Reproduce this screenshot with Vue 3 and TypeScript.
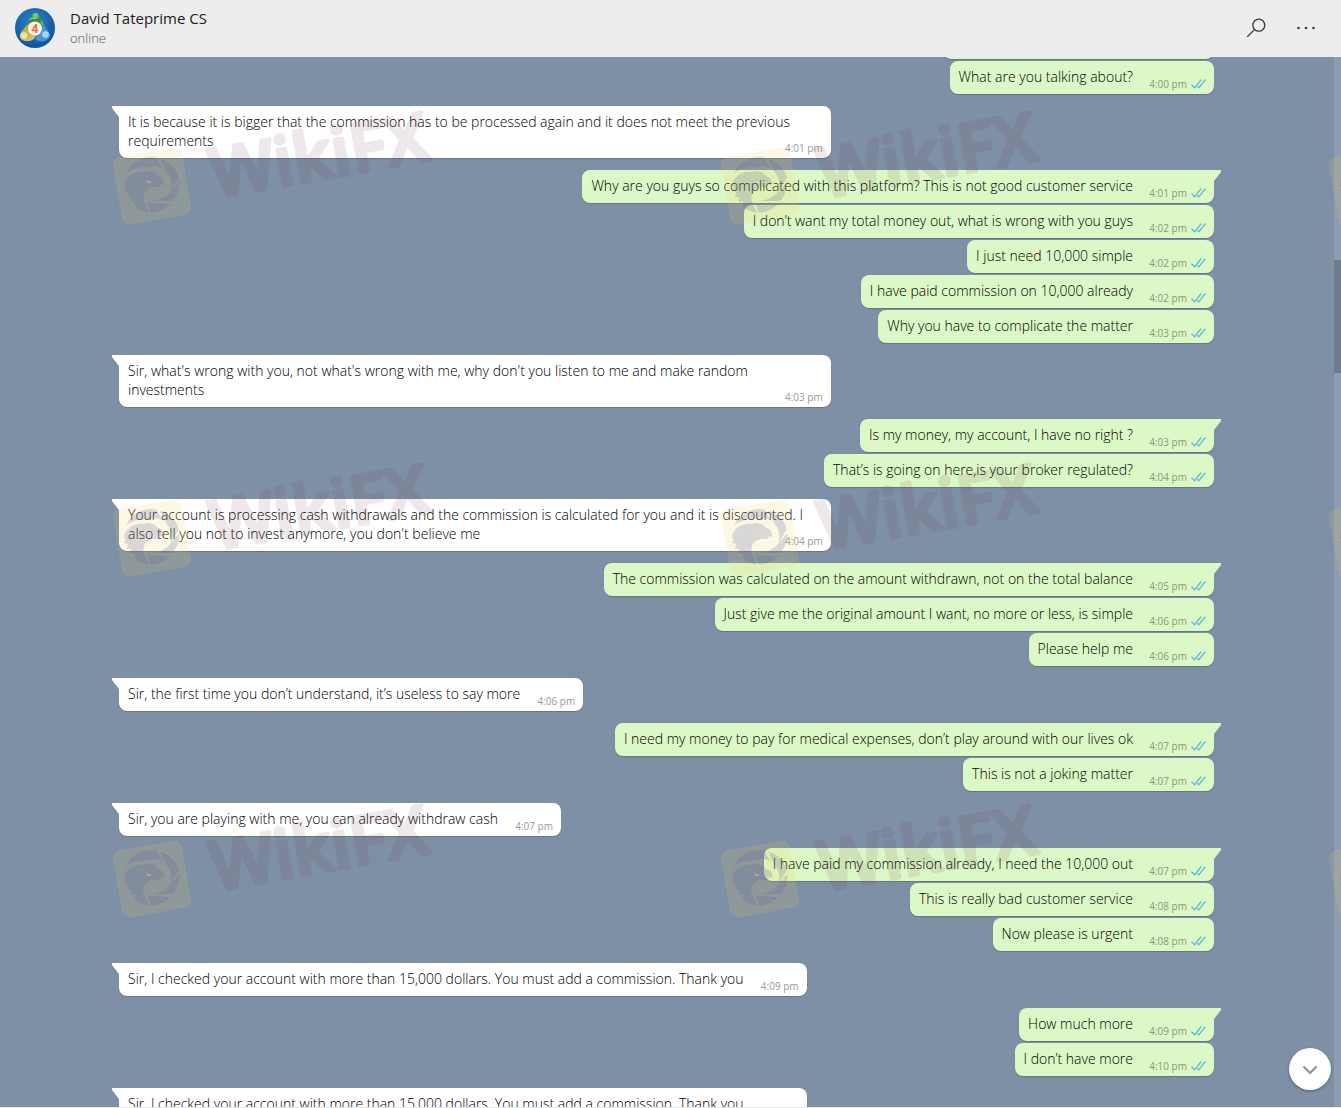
<script setup lang="ts">
interface Message {
  text: string
  time: string
  out?: boolean
  first?: boolean
  cut?: boolean
}

const messages: Message[] = [
  { text: '', time: '', out: true, cut: true },
  { text: 'What are you talking about?', time: '4:00 pm', out: true },
  { text: 'It is because it is bigger that the commission has to be processed again and it does not meet the previous requirements', time: '4:01 pm', first: true },
  { text: 'Why are you guys so complicated with this platform? This is not good customer service', time: '4:01 pm', out: true, first: true },
  { text: 'I don’t want my total money out, what is wrong with you guys', time: '4:02 pm', out: true },
  { text: 'I just need 10,000 simple', time: '4:02 pm', out: true },
  { text: 'I have paid commission on 10,000 already', time: '4:02 pm', out: true },
  { text: 'Why you have to complicate the matter', time: '4:03 pm', out: true },
  { text: "Sir, what's wrong with you, not what's wrong with me, why don't you listen to me and make random investments", time: '4:03 pm', first: true },
  { text: 'Is my money, my account, I have no right ?', time: '4:03 pm', out: true, first: true },
  { text: 'That’s is going on here,is your broker regulated?', time: '4:04 pm', out: true },
  { text: "Your account is processing cash withdrawals and the commission is calculated for you and it is discounted. I also tell you not to invest anymore, you don't believe me", time: '4:04 pm', first: true },
  { text: 'The commission was calculated on the amount withdrawn, not on the total balance', time: '4:05 pm', out: true, first: true },
  { text: 'Just give me the original amount I want, no more or less, is simple', time: '4:06 pm', out: true },
  { text: 'Please help me', time: '4:06 pm', out: true },
  { text: 'Sir, the first time you don’t understand, it’s useless to say more', time: '4:06 pm', first: true },
  { text: 'I need my money to pay for medical expenses, don’t play around with our lives ok', time: '4:07 pm', out: true, first: true },
  { text: 'This is not a joking matter', time: '4:07 pm', out: true },
  { text: 'Sir, you are playing with me, you can already withdraw cash', time: '4:07 pm', first: true },
  { text: 'I have paid my commission already, I need the 10,000 out', time: '4:07 pm', out: true, first: true },
  { text: 'This is really bad customer service', time: '4:08 pm', out: true },
  { text: 'Now please is urgent', time: '4:08 pm', out: true },
  { text: 'Sir, I checked your account with more than 15,000 dollars. You must add a commission. Thank you', time: '4:09 pm', first: true },
  { text: 'How much more', time: '4:09 pm', out: true, first: true },
  { text: 'I don’t have more', time: '4:10 pm', out: true },
  { text: 'Sir, I checked your account with more than 15,000 dollars. You must add a commission. Thank you', time: '', first: true },
]

const marks = [110, 462, 803].flatMap((y) => [112, 720, 1328].map((x) => ({ x, y })))
</script>

<template>
  <div class="app">
    <header class="bar">
      <svg class="avatar" viewBox="0 0 40 40" aria-hidden="true">
        <defs>
          <radialGradient id="sky" cx="0.45" cy="0.35" r="0.7">
            <stop offset="0" stop-color="#2a86c8" />
            <stop offset="1" stop-color="#0c4f9c" />
          </radialGradient>
          <linearGradient id="gold" x2="0" y2="1">
            <stop offset="0" stop-color="#a9a23c" />
            <stop offset="1" stop-color="#d8c568" />
          </linearGradient>
        </defs>
        <circle cx="20" cy="20" r="20" fill="url(#sky)" />
        <path d="M14 17c-2-3 0-6 2-7 0-6 9-6 9 0 3 1 5 4 3 8l-7 4z" fill="#3d8a48" />
        <path d="M6 31c-2-2-1-6 1-8l4-5 5-4 7 10-4 7c-5 3-9 3-13 0z" fill="url(#gold)" />
        <path d="M33 31c3-2 2-6 0-8l-4-6-9 6 1 9c4 2 9 2 12-1z" fill="#4a94d0" />
        <circle cx="20.500" cy="8" r="3" fill="#7cc47f" />
        <circle cx="9" cy="27.500" r="3.300" fill="#f0e8a2" />
        <circle cx="30.500" cy="26.500" r="3.300" fill="#a9d4f0" />
        <path d="M14 12c2-2 4-2 6-1M26 13l2 4" fill="none" stroke="#a5d8a0" stroke-width="1" />
        <circle cx="20" cy="20.500" r="7" fill="#f7f2ea" />
        <text x="20" y="25" text-anchor="middle" class="avatar-num">4</text>
      </svg>
      <div class="who">
        <h1 class="name">David Tateprime CS</h1>
        <p class="status">online</p>
      </div>
      <button class="icon-btn" type="button" aria-label="Search">
        <svg width="20" height="20" viewBox="0 0 20 20" fill="none" stroke="#3c3c3c" stroke-width="1.300">
          <circle cx="12.800" cy="7.200" r="6" />
          <path d="M8.500 11.600 1.300 18.700" />
        </svg>
      </button>
      <button class="icon-btn" type="button" aria-label="Menu">
        <svg width="20" height="20" viewBox="0 0 20 20" fill="#3c3c3c">
          <circle cx="2.500" cy="10" r="1.300" />
          <circle cx="10" cy="10" r="1.300" />
          <circle cx="17.500" cy="10" r="1.300" />
        </svg>
      </button>
    </header>

    <main class="chat">
      <div class="list">
        <div
          v-for="(m, i) in messages"
          :key="i"
          class="row"
          :class="{ out: m.out, first: m.first }"
        >
          <div class="bubble" :class="{ cut: m.cut }">
            {{ m.text }}<span class="space"></span>
            <span v-if="m.time" class="meta">
              <time>{{ m.time }}</time>
              <svg v-if="m.out" width="15" height="10" viewBox="0 0 15 10" fill="none" stroke="#4fb6e0" stroke-width="1.300">
                <path d="M0.500 5.600 3.600 8.800 10.200 0.700M6.400 7.400 7.800 8.800 14.400 0.700" />
              </svg>
            </span>
          </div>
        </div>
      </div>
      <div class="track"><div class="thumb"></div></div>
      <button class="down" type="button" aria-label="Scroll to bottom">
        <svg width="16" height="10" viewBox="0 0 16 10" fill="none" stroke="#8f9294" stroke-width="2.200">
          <path d="M1.500 1.500 8 8l6.500-6.500" />
        </svg>
      </button>
    </main>

    <svg class="marks" aria-hidden="true">
      <defs>
        <g id="wikifx">
          <rect x="-35" y="-34" width="70" height="68" rx="8" transform="translate(40 76) rotate(-10)" fill="#f0cc60" fill-opacity="0.160" />
          <g transform="translate(40 75)" fill="#5058a0" fill-opacity="0.200">
            <path d="M-26-12A28 28 0 0 1 4-27.500L11-16C7-19 2-20-4-18-12-18-20-16-26-12z" />
            <path d="M8-26.500A28 28 0 0 1 27-8L18 7C21-1 19-8 14-14z" />
            <path d="M27.500-4A28 28 0 0 1 20 16L0 16C8 15 14 12 18 7z" />
            <path d="M18 19A28 28 0 0 1-1 27.500L-5 18z" />
            <path d="M-27-4C-22-12-14-14-8-13-4-15 2-14 6-9 10-8 13-5 12 0L7-1 9 2 0 2C-7 4-10 10-8 17L-3 27.500C-10 27-15 24-17 21L-17 16-21 17-21 12-25 12-24 7-28 6-26 2-28 1z" />
          </g>
          <path d="M33 70.500 40 71.500 37 73.500z" fill="#f0e0b0" fill-opacity="0.400" />
          <text class="mark-text" transform="translate(103 88) rotate(-10)">WikiFX</text>
        </g>
      </defs>
      <use v-for="(p, i) in marks" :key="i" href="#wikifx" :x="p.x" :y="p.y" />
    </svg>
  </div>
</template>

<style>
html,
body {
  margin: 0;
  overflow: hidden;
}
</style>

<style scoped>
.app {
  position: relative;
  display: flex;
  flex-direction: column;
  height: 100vh;
  overflow: hidden;
  font-family: 'Open Sans', 'Noto Sans', sans-serif;
  color: #000;
}

.bar {
  display: flex;
  align-items: center;
  flex: none;
  height: 57px;
  padding: 0 25px 2px 15px;
  box-sizing: border-box;
  background: #ededed;
}

.avatar {
  width: 40px;
  height: 40px;
  margin-right: 15px;
}

.avatar-num {
  font: 700 12px 'Open Sans', sans-serif;
  fill: #e8703a;
}

.who {
  flex: 1;
}

.name {
  margin: 0;
  font-size: 15px;
  font-weight: 400;
  line-height: 21px;
  color: #1c1c1c;
}

.status {
  margin: 0;
  font-size: 13px;
  font-weight: 300;
  line-height: 18px;
  color: #555;
}

.icon-btn {
  display: flex;
  padding: 0;
  margin-left: 30px;
  border: 0;
  background: none;
}

.chat {
  position: relative;
  display: flex;
  flex: 1;
  min-height: 0;
  overflow: hidden;
  background: #7e90a5;
  border-bottom: 1px solid #e6e8ea;
}

.list {
  flex: 1;
  min-width: 0;
  margin-top: -33px;
  padding: 0 120px 0 119px;
}

.row {
  display: flex;
  margin-top: 2px;
}

.row.first {
  margin-top: 12px;
}

.row.out {
  justify-content: flex-end;
}

.bubble {
  position: relative;
  box-sizing: border-box;
  max-width: 65%;
  min-height: 33px;
  padding: 6px 9px 8px;
  border-radius: 8px;
  background: #fff;
  box-shadow: 0 1px 1px rgba(0, 0, 0, 0.2);
  font-size: 14px;
  font-weight: 300;
  line-height: 19px;
}

.bubble.cut {
  width: 271px;
}

.out .bubble {
  background: #dcf8c6;
}

.first .bubble {
  border-top-left-radius: 0;
}

.first.out .bubble {
  border-top-left-radius: 8px;
  border-top-right-radius: 0;
}

.first .bubble::before {
  content: '';
  position: absolute;
  top: 0;
  left: -7px;
  width: 7px;
  height: 11px;
  background: inherit;
  clip-path: polygon(0 0, 100% 0, 100% 100%, 0 2px);
}

.first.out .bubble::before {
  left: auto;
  right: -7px;
  clip-path: polygon(0 0, 100% 0, 100% 2px, 0 100%);
}

.space {
  display: inline-block;
  width: 54px;
}

.out .space {
  width: 72px;
}

.meta {
  position: absolute;
  right: 8px;
  bottom: 3px;
  display: flex;
  align-items: center;
  gap: 4px;
  font-size: 10px;
  font-weight: 400;
  line-height: 14px;
  color: #999;
}

.out .meta {
  color: #869a79;
}

.track {
  flex: none;
  width: 7px;
  background: #8e9cb0;
}

.thumb {
  height: 113px;
  margin-top: 203px;
  background: #6f7c8d;
}

.down {
  position: absolute;
  right: 10px;
  bottom: 17px;
  display: flex;
  align-items: center;
  justify-content: center;
  width: 42px;
  height: 42px;
  padding: 2px 0 0;
  border: 0;
  border-radius: 50%;
  background: #fff;
  box-shadow: 0 1px 3px rgba(0, 0, 0, 0.35);
}

.marks {
  position: absolute;
  inset: 0;
  width: 100%;
  height: 100%;
  pointer-events: none;
}

.mark-text {
  font: 600 68px 'Open Sans', sans-serif;
  fill: #703848;
  stroke: #703848;
  stroke-width: 4px;
  stroke-linejoin: round;
  opacity: 0.11;
}
</style>
